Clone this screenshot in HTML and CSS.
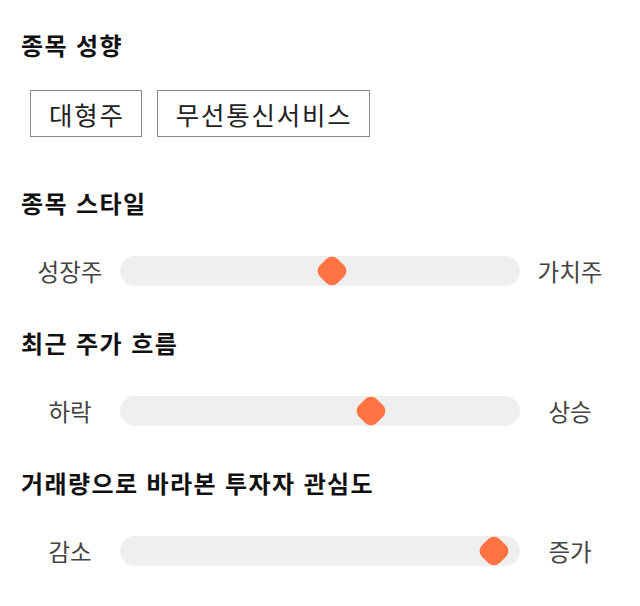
FILE: index.html
```html
<!DOCTYPE html>
<html lang="ko">
<head>
<meta charset="utf-8">
<link rel="stylesheet" href="styles.css">
</head>
<body>
<main class="page">
  <section class="section section-first">
    <h2 class="title">종목 성향</h2>
    <div class="chips">
      <span class="chip">대형주</span>
      <span class="chip">무선통신서비스</span>
    </div>
  </section>
  <section class="section">
    <h2 class="title">종목 스타일</h2>
    <div class="slider">
      <span class="label">성장주</span>
      <div class="track"><span class="thumb" style="left: 53%"></span></div>
      <span class="label">가치주</span>
    </div>
  </section>
  <section class="section">
    <h2 class="title">최근 주가 흐름</h2>
    <div class="slider">
      <span class="label">하락</span>
      <div class="track"><span class="thumb" style="left: 62.75%"></span></div>
      <span class="label">상승</span>
    </div>
  </section>
  <section class="section">
    <h2 class="title">거래량으로 바라본 투자자 관심도</h2>
    <div class="slider">
      <span class="label">감소</span>
      <div class="track"><span class="thumb" style="left: 93.5%"></span></div>
      <span class="label">증가</span>
    </div>
  </section>
</main>
</body>
</html>
```

FILE: styles.css
```css
* { box-sizing: border-box; }
html, body { margin: 0; padding: 0; background: #fff; }
body {
  font-family: "Noto Sans CJK KR", "Noto Sans", sans-serif;
  color: #111;
}
.page {
  width: 640px;
  padding: 29px 20px 0 20px;
  display: flex;
  flex-direction: column;
  gap: 41px;
}
.section-first { margin-bottom: 9px; }
.title {
  margin: 0;
  font-size: 24px;
  line-height: 32px;
  font-weight: 700;
  letter-spacing: 1.4px;
  color: #111;
  padding-left: 1px;
}
.chips {
  display: flex;
  gap: 15px;
  padding-left: 10px;
  margin-top: 29px;
}
.chip {
  display: inline-flex;
  align-items: center;
  justify-content: center;
  height: 47px;
  padding: 0 16px 0 18px;
  border: 1px solid #8a8a8a;
  font-size: 25.5px;
  letter-spacing: 1.8px;
  color: #222;
}
.slider {
  display: flex;
  align-items: center;
  margin-top: 37px;
  height: 30px;
}
.label {
  width: 100px;
  text-align: center;
  font-size: 23.5px;
  color: #444;
  flex: none;
}
.track {
  position: relative;
  flex: 1;
  height: 30px;
  background: #efefef;
  border-radius: 15px;
}
.thumb {
  position: absolute;
  top: 50%;
  width: 25px;
  height: 25px;
  background: #ff7442;
  border-radius: 8px;
  transform: translate(-50%, -50%) rotate(45deg);
}
```
